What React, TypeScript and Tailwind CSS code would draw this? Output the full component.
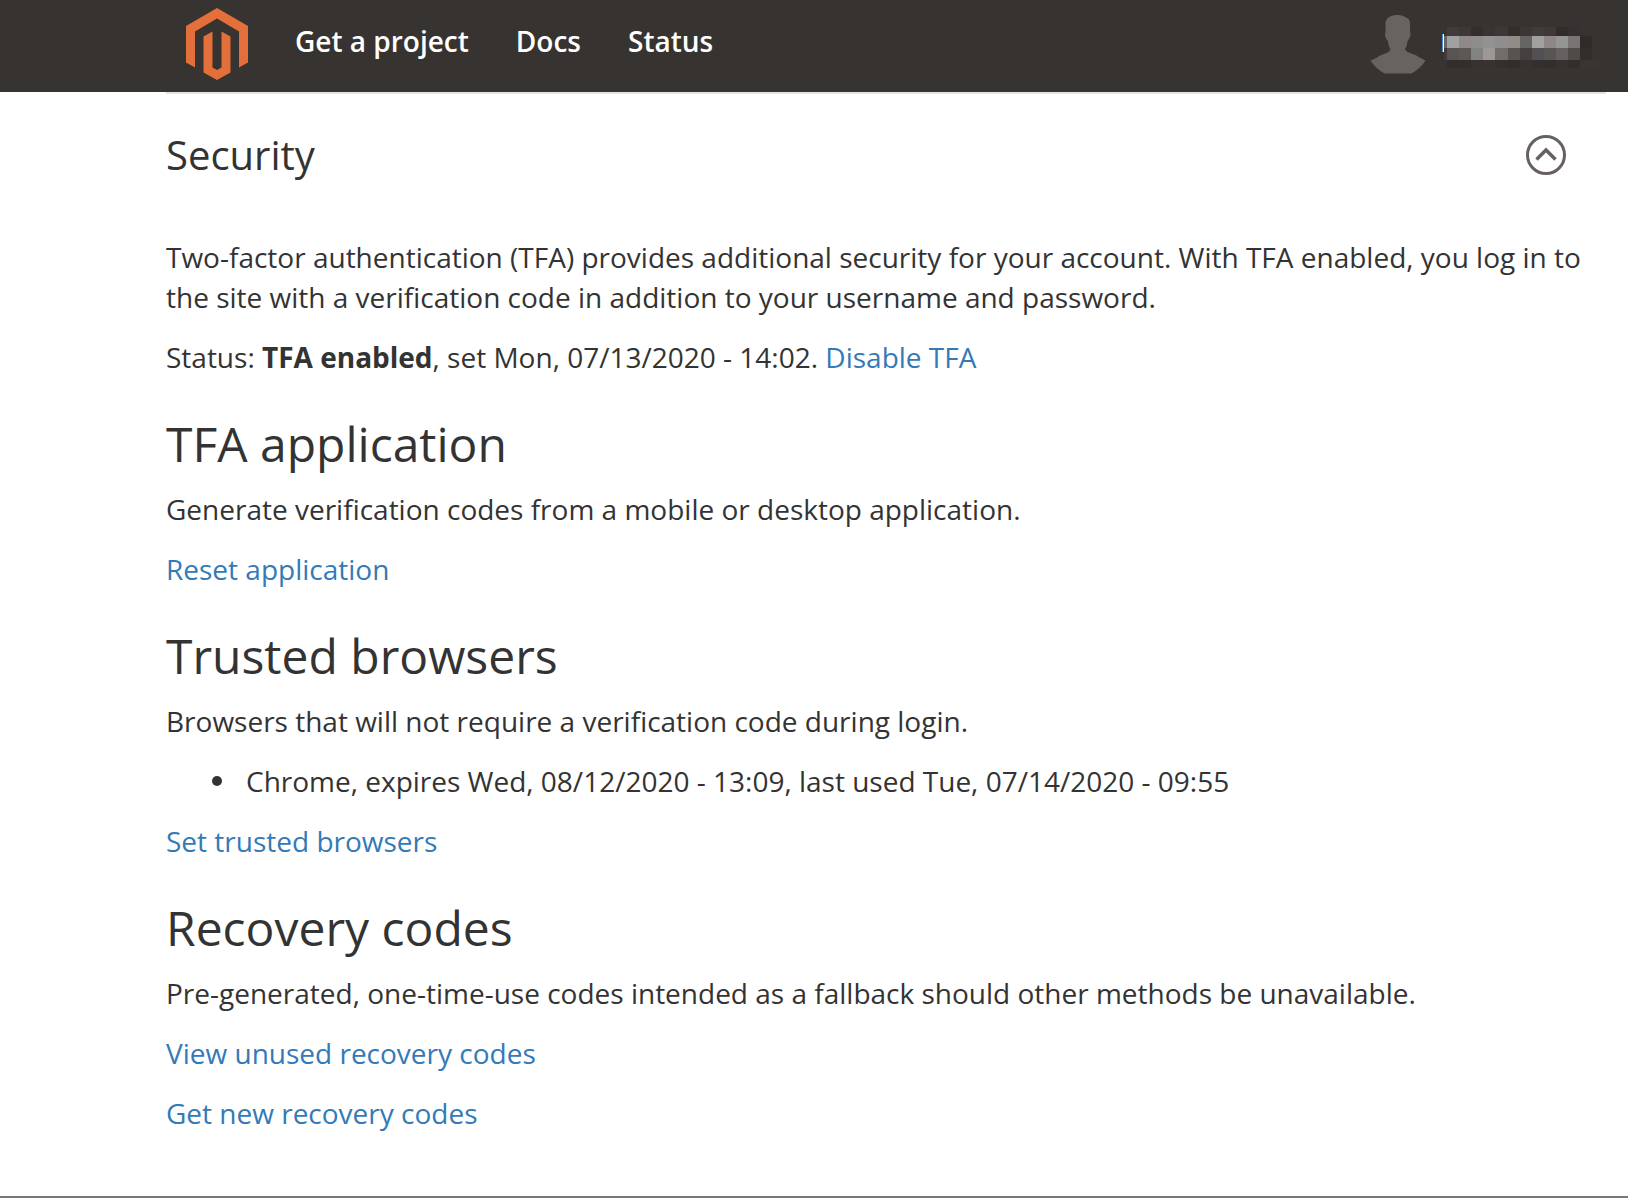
import React from "react";

const navItems = ["Get a project", "Docs", "Status"];

/* Obscured user name: one row of colour blocks per line. */
const upperBlocks = ["#a1a1a1", "#8f8a88", "#8e8d8b", "#929290", "#8e8d8f", "#908c87", "#656462", "#a0a09f", "#8d8886", "#959596", "#7a7572"];
const lowerBlocks = ["#575452", "#5c5856", "#828282", "#9d9896", "#716d6b", "#575350", "#45403f", "#525052", "#575655", "#656161", "#504b49"];
const topBlocks = ["#413c3a", "#3d3836", "#332e2b", "#393431", "#3d3835", "#342f2c", "#3c3735", "#413c39", "#3e3937", "#312c29", "#363130"];
const bottomBlocks = ["#322d2a", "#332e2b", "#37322f", "#37322f", "#342f2c", "#322d2a", "#37322f", "#342f2c", "#332e2b", "#37322f", "#332e2b"];

function BlockRow({ colors, y, height }: { colors: string[]; y: number; height: number }) {
  return (
    <>
      {colors.map((fill, i) => {
        const x = 5 + Math.round(i * 12.1);
        const end = 5 + Math.round((i + 1) * 12.1);
        return <rect key={i} x={x} y={y} width={end - x} height={height} fill={fill} />;
      })}
    </>
  );
}

function Logo() {
  return (
    <svg width="62" height="72" viewBox="0 0 62 72" fill="#e36f3b" aria-hidden="true">
      <path d="M31 0 62 18V54.5L53 59.5V23.5L31 10.5 9 23.5V59.5L0 54.5V18Z" />
      <path d="M17.5 28.5 26.5 23.5V59.5L31 62 35.5 59.5V23.5L44.5 28.5V64.5L31 72 17.5 64.5Z" />
    </svg>
  );
}

function Avatar() {
  return (
    <svg width="56" height="60" viewBox="0 0 56 60" fill="#676361" aria-hidden="true">
      <path d="M28 1C21 1 16 3.500 15.500 9V18C14.500 20 14.800 24 18 27C18.300 31 19 33 20.500 35C20 37 18.500 38 16.500 39L9 42C7 44 3 45.500 .5 46.500C4 52 9 56.500 14.500 59.500H41.500C47 56.500 52 52 55.500 46.500C52 44.800 49 43.500 46.500 41.500L39.500 38.800C37 38 35.500 37 35 35C36.500 33 37 31 37.500 27C40.500 24 41 20 40 18V9C39.500 5.500 38.500 4 36.500 4C34 2 31.500 1 28 1Z" />
    </svg>
  );
}

function Header() {
  return (
    <header className="flex h-[92px] items-start bg-[#373330] pr-[30px] pl-[186px]">
      <a href="#" aria-label="Home" className="pt-2"><Logo /></a>
      <nav className="ml-[47px] flex gap-[47px] pt-[21px] text-[28px] leading-10 font-semibold text-white">
        {navItems.map((item) => (
          <a key={item} href="#" className="whitespace-nowrap">{item}</a>
        ))}
      </nav>
      <a href="#" aria-label="Account" className="ml-auto flex gap-4 pt-[14px]">
        <Avatar />
        <svg width="156" height="56" viewBox="0 0 156 56" shapeRendering="crispEdges" aria-hidden="true">
          <rect x="0" y="20" width="1" height="18" fill="#4a90d9" />
          <rect x="1" y="20" width="1" height="18" fill="#fff" />
          <rect x="2" y="22" width="3" height="12" fill="#686564" />
          <rect x="2" y="34" width="3" height="12" fill="#413c3a" />
          <BlockRow colors={topBlocks} y={13} height={9} />
          <BlockRow colors={upperBlocks} y={22} height={12} />
          <BlockRow colors={lowerBlocks} y={34} height={12} />
          <BlockRow colors={bottomBlocks} y={46} height={8} />
          <rect x="138" y="22" width="12" height="12" fill="#302b28" />
          <rect x="138" y="34" width="12" height="12" fill="#332e2b" />
          <rect x="138" y="46" width="17" height="8" fill="#3a3532" />
        </svg>
      </a>
    </header>
  );
}

function Section({ title, description, children }: { title: string; description: string; children: React.ReactNode }) {
  return (
    <section className="mt-5 flex flex-col gap-5">
      <h2 className="-mb-0.5 text-[48px] leading-[54px]">{title}</h2>
      <p>{description}</p>
      {children}
    </section>
  );
}

function TextLink({ children }: { children: React.ReactNode }) {
  return <a href="#" className="text-[#337ab7]">{children}</a>;
}

export default function App() {
  return (
    <div className="flex min-h-screen flex-col bg-white font-['Open_Sans',sans-serif] text-[28px] leading-10 text-[#333]">
      <Header />
      <main className="mr-[22px] ml-[166px] grow border-t-2 border-[#e3e3e3] pb-[62px]">
        <div className="flex items-center justify-between pt-[35px] pr-10">
          <h1 className="text-[40px] leading-[52px]">Security</h1>
          <button type="button" aria-label="Collapse security section" aria-expanded="true">
            <svg width="40" height="40" viewBox="0 0 40 40" fill="none" stroke="#666160" strokeWidth="3">
              <circle cx="20" cy="20" r="18.5" />
              <path d="M10.500 24.500 20 15 29.500 24.500" strokeWidth="3.500" />
            </svg>
          </button>
        </div>
        <div className="mt-14 flex flex-col gap-5">
          <p>
            Two-factor authentication (TFA) provides additional security for your account. With TFA enabled, you log in to the site with a verification code in addition to your username and password.
          </p>
          <p>
            Status: <strong className="font-bold">TFA enabled</strong>, set Mon, 07/13/2020 - 14:02. <TextLink>Disable TFA</TextLink>
          </p>
          <Section title="TFA application" description="Generate verification codes from a mobile or desktop application.">
            <p><TextLink>Reset application</TextLink></p>
          </Section>
          <Section title="Trusted browsers" description="Browsers that will not require a verification code during login.">
            <ul className="pl-[46px]">
              <li className="flex items-center gap-6 before:size-2.5 before:shrink-0 before:rounded-full before:bg-[#333]">Chrome, expires Wed, 08/12/2020 - 13:09, last used Tue, 07/14/2020 - 09:55</li>
            </ul>
            <p><TextLink>Set trusted browsers</TextLink></p>
          </Section>
          <Section title="Recovery codes" description="Pre-generated, one-time-use codes intended as a fallback should other methods be unavailable.">
            <p><TextLink>View unused recovery codes</TextLink></p>
            <p><TextLink>Get new recovery codes</TextLink></p>
          </Section>
        </div>
      </main>
      <footer className="h-[2px] bg-[#777]" />
    </div>
  );
}
